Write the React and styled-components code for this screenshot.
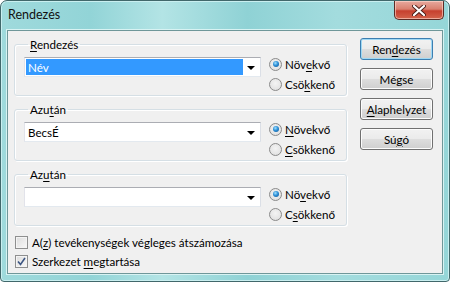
import React from "react";
import styled, { createGlobalStyle } from "styled-components";

const GlobalStyle = createGlobalStyle`
  html, body {
    margin: 0;
    padding: 0;
    background: #ffffff;
  }
  body {
    font-family: "Lato", "Noto Sans", sans-serif;
    font-size: 11.6px;
    color: #000;
  }
`;

const Window = styled.div`
  width: 450px;
  height: 282px;
  box-sizing: border-box;
  border: 1px solid #41686b;
  border-radius: 7px 7px 4px 4px;
  background: linear-gradient(
    to right,
    #9fdadc 0%,
    #92d4d7 20%,
    #b3e4e5 36%,
    #8fd2d5 55%,
    #a3dcde 75%,
    #95d6d8 100%
  );
  box-shadow: inset 0 0 0 1px #c9eff0;
  display: flex;
  flex-direction: column;
  overflow: hidden;
`;

const TitleBar = styled.div`
  height: 28px;
  display: flex;
  align-items: flex-start;
  justify-content: space-between;
  padding: 0 5px 0 7px;
`;

const Title = styled.span`
  margin-top: 6px;
  font-size: 12.5px;
  color: #111;
`;

const CloseButton = styled.div`
  width: 50px;
  height: 19px;
  box-sizing: border-box;
  border: 1px solid #5b2b25;
  border-top: none;
  border-radius: 0 0 5px 5px;
  background: linear-gradient(#e7a99e 0%, #d9806f 45%, #c6402f 55%, #d3634c 100%);
  box-shadow: inset 0 0 0 1px rgba(255, 220, 210, 0.6);
  display: flex;
  align-items: center;
  justify-content: center;
`;

const Client = styled.div`
  margin: 1px 6px 7px 6px;
  flex: 1;
  border: 1px solid #6f9799;
  background: #f0f0f0;
  display: flex;
  padding: 6px 8px 0 6px;
  gap: 13px;
  box-shadow: 0 0 0 1px #d8f3f3;
`;

const LeftColumn = styled.div`
  display: flex;
  flex-direction: column;
  width: 333px;
`;

const Group = styled.fieldset`
  margin: 0 0 6px 0;
  padding: 5px 0 0 9px;
  height: 59px;
  box-sizing: border-box;
  border: 1px solid #d5dfe5;
  border-radius: 3px;
  box-shadow: inset 1px 1px 0 #fff, 1px 1px 0 #fff;
  min-width: 0;
`;

const Legend = styled.legend`
  padding: 0 2px;
  margin-left: 4px;
  line-height: 15px;
  color: #000;
`;

const GroupRow = styled.div`
  display: flex;
  align-items: flex-start;
  gap: 8px;
`;

const Combo = styled.div`
  width: 237px;
  height: 20px;
  box-sizing: border-box;
  border: 1px solid #abadb3;
  border-color: #abadb3 #dbdfe6 #e3e9ef #e2e3ea;
  background: #fff;
  display: flex;
  align-items: center;
  padding: 1px;
`;

const ComboValue = styled.div`
  flex: 1;
  height: 100%;
  display: flex;
  align-items: center;
  padding-left: 2px;
  background: ${(p) => (p.selected ? "#3399ff" : "transparent")};
  color: ${(p) => (p.selected ? "#fff" : "#000")};
`;

const Arrow = styled.div`
  width: 16px;
  display: flex;
  justify-content: center;
  align-items: center;
  &::after {
    content: "";
    border-left: 4px solid transparent;
    border-right: 4px solid transparent;
    border-top: 4px solid #000;
    margin-top: 1px;
  }
`;

const RadioColumn = styled.div`
  display: flex;
  flex-direction: column;
  margin-top: -3px;
`;

const OptionRow = styled.label`
  height: 20px;
  display: flex;
  align-items: center;
  gap: 3px;
  color: #000;
`;

const RadioCircle = styled.span`
  width: 11px;
  height: 11px;
  border-radius: 50%;
  border: 1px solid #8a8a8a;
  background: radial-gradient(circle at 50% 40%, #f4f4f4, #dcdcdc);
  display: flex;
  align-items: center;
  justify-content: center;
  &::after {
    content: "";
    display: ${(p) => (p.checked ? "block" : "none")};
    width: 6px;
    height: 6px;
    border-radius: 50%;
    background: radial-gradient(circle at 40% 35%, #9fe0ff 0%, #2d8fd6 45%, #0b4f8f 100%);
  }
`;

const CheckRow = styled.label`
  height: 19px;
  display: flex;
  align-items: center;
  gap: 4px;
  margin-left: 1px;
`;

const CheckBox = styled.span`
  width: 11px;
  height: 11px;
  border: 1px solid #8e8f8f;
  background: linear-gradient(135deg, #dcdcdc, #f8f8f8);
  box-shadow: inset 0 0 0 1px #f4f4f4;
  display: flex;
  align-items: center;
  justify-content: center;
`;

const Checks = styled.div`
  display: flex;
  flex-direction: column;
  margin-top: 1px;
`;

const ButtonColumn = styled.div`
  display: flex;
  flex-direction: column;
  gap: 8px;
  padding-top: 1px;
`;

const Button = styled.button`
  width: 73px;
  height: 22px;
  box-sizing: border-box;
  font-family: inherit;
  font-size: inherit;
  color: #000;
  padding: 0;
  border: 1px solid ${(p) => (p.primary ? "#3c7fb1" : "#707070")};
  border-radius: 3px;
  background: linear-gradient(#f2f2f2 0%, #ebebeb 48%, #dddddd 52%, #cfcfcf 100%);
  box-shadow: inset 0 0 0 1px ${(p) => (p.primary ? "#9fd8f4" : "#fcfcfc")};
`;

const U = styled.span`
  text-decoration: underline;
  text-underline-offset: 2px;
`;

const CloseIcon = () => (
  <svg width="14" height="11" viewBox="0 0 14 11">
    <path
      d="M2 1 L12 10 M12 1 L2 10"
      stroke="#4a1e18"
      strokeWidth="4"
      strokeLinecap="round"
    />
    <path
      d="M2 1 L12 10 M12 1 L2 10"
      stroke="#ffffff"
      strokeWidth="2.2"
      strokeLinecap="round"
    />
  </svg>
);

const CheckMark = () => (
  <svg width="9" height="9" viewBox="0 0 9 9">
    <path d="M1 4.5 L3.5 7.5 L8 1" fill="none" stroke="#3d5683" strokeWidth="1.6" />
  </svg>
);

const SortGroup = ({ title, value, selected, up, down }) => (
  <Group>
    <Legend>{title}</Legend>
    <GroupRow>
      <Combo>
        <ComboValue selected={selected}>{value}</ComboValue>
        <Arrow />
      </Combo>
      <RadioColumn>
        <OptionRow>
          <RadioCircle checked />
          <span>{up}</span>
        </OptionRow>
        <OptionRow>
          <RadioCircle />
          <span>{down}</span>
        </OptionRow>
      </RadioColumn>
    </GroupRow>
  </Group>
);

export default function App() {
  return (
    <>
      <GlobalStyle />
      <Window>
        <TitleBar>
          <Title>Rendezés</Title>
          <CloseButton>
            <CloseIcon />
          </CloseButton>
        </TitleBar>
        <Client>
          <LeftColumn>
            <SortGroup
              title={<><U>R</U>endezés</>}
              value="Név"
              selected
              up={<>Növ<U>e</U>kvő</>}
              down={<>Csö<U>k</U>kenő</>}
            />
            <SortGroup
              title={<>Azu<U>t</U>án</>}
              value="BecsÉ"
              up={<><U>N</U>övekvő</>}
              down={<><U>C</U>sökkenő</>}
            />
            <SortGroup
              title={<>Az<U>u</U>tán</>}
              value=""
              up={<>Nö<U>v</U>ekvő</>}
              down={<>C<U>s</U>ökkenő</>}
            />
            <Checks>
              <CheckRow>
                <CheckBox />
                <span>
                  A(<U>z</U>) tevékenységek végleges átszámozása
                </span>
              </CheckRow>
              <CheckRow>
                <CheckBox>
                  <CheckMark />
                </CheckBox>
                <span>
                  Szerkezet <U>m</U>egtartása
                </span>
              </CheckRow>
            </Checks>
          </LeftColumn>
          <ButtonColumn>
            <Button primary>
              Ren<U>d</U>ezés
            </Button>
            <Button>Mégse</Button>
            <Button>
              <U>A</U>laphelyzet
            </Button>
            <Button>
              Sú<U>g</U>ó
            </Button>
          </ButtonColumn>
        </Client>
      </Window>
    </>
  );
}
